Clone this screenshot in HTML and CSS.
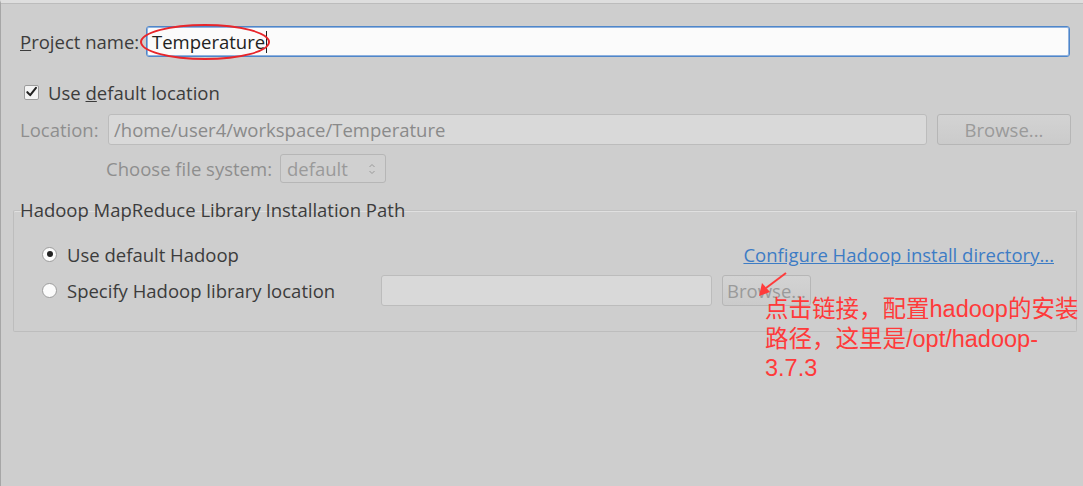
FILE: index.html
```html
<!DOCTYPE html>
<html>
<head>
<meta charset="utf-8">
<link rel="stylesheet" href="styles.css">
</head>
<body>
<div class="page">
  <div class="row row-name">
    <label class="lbl"><u>P</u>roject name:</label>
    <div class="input active">Temperature<span class="caret"></span></div>
  </div>
  <div class="row row-check">
    <span class="checkbox"><svg width="14" height="14" viewBox="0 0 14 14"><path d="M2.5 7.2 L5.6 10.4 L11.8 2.6" fill="none" stroke="#222" stroke-width="2.2" stroke-linecap="round" stroke-linejoin="round"/></svg></span>
    <span class="lbl">Use <u>d</u>efault location</span>
  </div>
  <div class="row row-loc">
    <span class="lbl dis">Location:</span>
    <div class="input disabled">/home/user4/workspace/Temperature</div>
    <div class="btn">Browse...</div>
  </div>
  <div class="row row-fs">
    <span class="lbl dis fs-lbl">Choose file system:</span>
    <div class="combo"><span>default</span><svg width="8" height="14" viewBox="0 0 8 14"><path d="M1.5 5 L4 2.5 L6.5 5" fill="none" stroke="#9a9a9a" stroke-width="1"/><path d="M1.5 9 L4 11.5 L6.5 9" fill="none" stroke="#9a9a9a" stroke-width="1"/></svg></div>
  </div>
  <fieldset class="group">
    <legend class="lbl">Hadoop MapReduce Library Installation Path</legend>
    <div class="grow grow1">
      <span class="radio on"></span>
      <span class="lbl">Use default Hadoop</span>
      <a class="link">Configure Hadoop install directory...</a>
    </div>
    <div class="grow grow2">
      <span class="radio"></span>
      <span class="lbl spec">Specify Hadoop library location</span>
      <div class="input disabled small"></div>
      <div class="btn small-btn">Browse...</div>
    </div>
  </fieldset>

  <span class="ellipse"></span>
  <svg class="arrow" width="40" height="36" viewBox="0 0 40 36"><path d="M33 2 L13 17" stroke="#ff3b3b" stroke-width="2" fill="none"/><path d="M6 25 L9 12 L17 21 Z" fill="#ff3b3b"/></svg>
  <div class="note">点击链接，配置hadoop的安装路径，这里是/opt/hadoop-<wbr>3.7.3</div>
</div>
</body>
</html>
```

FILE: styles.css
```css
html, body {
  margin: 0;
  padding: 0;
  background: #cecece;
}
.page {
  position: relative;
  width: 1083px;
  height: 486px;
  box-sizing: border-box;
  border-top: 3px solid #dedede;
  border-left: 1px solid #a6a6a6;
  font-family: "Open Sans", "Noto Sans", sans-serif;
  font-size: 18.5px;
  color: #3c3c3c;
  overflow: hidden;
}
.page::before {
  content: "";
  display: block;
  height: 1px;
  background: #bcbcbc;
}
.lbl { white-space: nowrap; }
.dis { color: #8e8e8e; }
.row {
  display: flex;
  align-items: center;
}
.row-name {
  margin-top: 22px;
  padding-left: 19px;
  padding-right: 13px;
  height: 31px;
}
.row-name .lbl { width: 126px; }
.input {
  box-sizing: border-box;
  height: 31px;
  border-radius: 3px;
  display: flex;
  align-items: center;
  padding-left: 6px;
  white-space: nowrap;
}
.input.active {
  flex: 1;
  background: #fbfbfb;
  border: 1px solid #4f86c9;
  box-shadow: inset 0 0 0 1px #8fb2df;
  color: #222;
  padding-left: 5px;
}
.caret {
  display: inline-block;
  width: 1px;
  height: 22px;
  background: #222;
  margin-left: 1px;
}
.row-check {
  margin-top: 27px;
  padding-left: 23px;
  height: 16px;
}
.checkbox {
  width: 15px;
  height: 15px;
  box-sizing: border-box;
  border: 1px solid #9c9c9c;
  border-radius: 2px;
  background: #f4f4f4;
  display: flex;
  align-items: center;
  justify-content: center;
  margin-right: 9px;
}
.row-loc {
  margin-top: 14px;
  padding-left: 19px;
  padding-right: 12px;
  height: 31px;
}
.row-loc .lbl { width: 88px; }
.input.disabled {
  flex: 1;
  background: #d9d9d9;
  border: 1px solid #bcbcbc;
  color: #8a8a8a;
  padding-left: 5px;
}
.btn {
  box-sizing: border-box;
  height: 31px;
  border: 1px solid #b6b6b6;
  border-radius: 3px;
  background: linear-gradient(#d3d3d3, #cbcbcb);
  color: #9a9a9a;
  display: flex;
  align-items: center;
  justify-content: center;
}
.row-loc .btn {
  width: 134px;
  margin-left: 10px;
}
.row-fs {
  margin-top: 9px;
  height: 29px;
}
.fs-lbl {
  width: 271px;
  text-align: right;
  display: block;
}
.combo {
  box-sizing: border-box;
  width: 106px;
  height: 29px;
  margin-left: 8px;
  border: 1px solid #b6b6b6;
  border-radius: 3px;
  background: #d0d0d0;
  color: #9a9a9a;
  display: flex;
  align-items: center;
  justify-content: space-between;
  padding: 0 9px 0 6px;
}
.group {
  margin: 16px 6px 0 12px;
  padding: 0;
  border: 1px solid #bdbdbd;
  border-top-color: #c2c2c2;
  box-shadow: 0 1px 0 #e0e0e0 inset;
  border-radius: 2px;
  height: 133px;
  box-sizing: border-box;
  min-width: 0;
}
.group legend {
  padding: 0;
  margin-left: 6px;
  line-height: 22px;
}
.grow {
  display: flex;
  align-items: center;
  padding-left: 28px;
}
.grow1 {
  margin-top: 22px;
  height: 22px;
}
.grow2 {
  margin-top: 10px;
  height: 31px;
}
.radio {
  box-sizing: border-box;
  width: 15px;
  height: 15px;
  border-radius: 50%;
  border: 1px solid #9c9c9c;
  background: #fbfbfb;
  margin-right: 10px;
  display: flex;
  align-items: center;
  justify-content: center;
}
.radio.on::after {
  content: "";
  width: 6px;
  height: 6px;
  border-radius: 50%;
  background: #222;
}
.link {
  margin-left: auto;
  margin-right: 22px;
  color: #3d7cc5;
  text-decoration: underline;
  white-space: nowrap;
}
.spec { width: 314px; }
.input.small {
  flex: none;
  width: 331px;
}
.small-btn {
  width: 89px;
  margin-left: 10px;
}
.ellipse {
  position: absolute;
  left: 139px;
  top: 21px;
  width: 126px;
  height: 32px;
  border: 2px solid #e8262b;
  border-radius: 50%;
}
.arrow {
  position: absolute;
  left: 752px;
  top: 268px;
}
.note {
  position: absolute;
  left: 764px;
  top: 292px;
  width: 318px;
  font-family: "Liberation Sans", "Noto Sans CJK SC", sans-serif;
  font-size: 23.5px;
  line-height: 29.5px;
  color: #ff3a3a;
}
```
